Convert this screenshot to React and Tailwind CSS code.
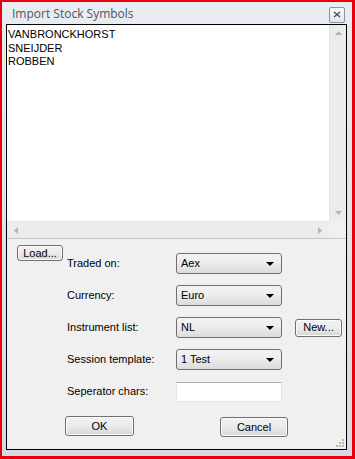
import React from "react";

const font = { fontFamily: '"Liberation Sans", Arial, sans-serif' };

const Combo = ({ value }) => (
  <div className="w-[106px] h-[21px] rounded-[3px] border border-[#707070] bg-gradient-to-b from-[#f4f4f4] via-[#ebebeb] to-[#dcdcdc] flex items-center justify-between pl-[4px] pr-[7px] text-[11px] text-black">
    <span>{value}</span>
    <svg width="8" height="4" viewBox="0 0 8 4">
      <path d="M0 0 H8 L4 4 Z" fill="#000" />
    </svg>
  </div>
);

const Button = ({ children, className }) => (
  <div
    className={
      "rounded-[3px] border border-[#707070] bg-gradient-to-b from-[#f2f2f2] via-[#ebebeb] to-[#d6d6d6] flex items-center justify-center text-[11px] text-black shadow-[inset_0_0_0_1px_#fcfcfc] " +
      className
    }
  >
    {children}
  </div>
);

const Row = ({ label, children }) => (
  <div className="flex items-center h-[21px]">
    <div className="w-[109px] text-[11px] text-black">{label}</div>
    {children}
  </div>
);

const App = () => {
  return (
    <div
      className="w-[355px] h-[459px] border-red-600 border-t-2 border-l-2 border-r-[3px] border-b-[3px] bg-[#ff0000]"
      style={font}
    >
      <div className="w-full h-full flex flex-col bg-gradient-to-b from-[#e9ecf0] to-[#d6dbe1] pl-[4px] pr-[5px] pb-[6px]">
        {/* title bar */}
        <div className="h-[22px] flex items-center justify-between pl-[6px] pr-[2px]">
          <span
            className="text-[12px] text-[#4e5863] pt-[1px]"
            style={{ fontFamily: '"Open Sans", "Noto Sans", sans-serif' }}
          >
            Import Stock Symbols
          </span>
          <div className="w-[16px] h-[16px] mt-[3px] rounded-[2px] border border-[#8a949e] bg-gradient-to-b from-[#f8f9fb] to-[#e2e6eb] flex items-center justify-center">
            <svg width="8" height="7" viewBox="0 0 8 7">
              <path d="M1 1 L7 6 M7 1 L1 6" stroke="#4a535d" strokeWidth="1.5" />
            </svg>
          </div>
        </div>

        {/* client area */}
        <div className="flex-1 border border-black bg-[#f0f0f0] flex flex-col relative">
          {/* text box */}
          <div className="h-[214px] border-b border-[#c8c8c8] bg-white flex flex-col">
            <div className="flex flex-1">
              <div className="flex-1 pl-[1px] pt-[3px] text-[11px] leading-[13.5px] text-black">
                <div>VANBRONCKHORST</div>
                <div>SNEIJDER</div>
                <div>ROBBEN</div>
              </div>
              <div className="w-[17px] bg-[#ececec] border-l border-[#e4e4e4] flex flex-col items-center justify-between py-[6px]">
                <svg width="7" height="4" viewBox="0 0 7 4">
                  <path d="M0 4 L3.5 0 L7 4 Z" fill="#b4b4b4" />
                </svg>
                <svg width="7" height="4" viewBox="0 0 7 4">
                  <path d="M0 0 L3.5 4 L7 0 Z" fill="#b4b4b4" />
                </svg>
              </div>
            </div>
            <div className="h-[17px] flex">
              <div className="flex-1 bg-[#ececec] border-t border-[#e4e4e4] flex items-center justify-between px-[7px]">
                <svg width="4" height="7" viewBox="0 0 4 7">
                  <path d="M4 0 L0 3.5 L4 7 Z" fill="#b4b4b4" />
                </svg>
                <svg width="4" height="7" viewBox="0 0 4 7">
                  <path d="M0 0 L4 3.5 L0 7 Z" fill="#b4b4b4" />
                </svg>
              </div>
              <div className="w-[17px] bg-[#f0f0f0]" />
            </div>
          </div>

          {/* form */}
          <div className="flex items-start pt-[6px] pl-[10px]">
            <Button className="w-[46px] h-[16px]">Load...</Button>
            <div className="flex flex-col gap-[11px] mt-[8px] ml-[4px]">
              <Row label="Traded on:">
                <Combo value="Aex" />
              </Row>
              <Row label="Currency:">
                <Combo value="Euro" />
              </Row>
              <Row label="Instrument list:">
                <Combo value="NL" />
                <Button className="w-[47px] h-[18px] ml-[13px]">New...</Button>
              </Row>
              <Row label="Session template:">
                <Combo value="1 Test" />
              </Row>
              <Row label="Seperator chars:">
                <div className="w-[106px] h-[20px] border border-[#e3e3e3] border-t-[#abadb3] bg-white" />
              </Row>
            </div>
          </div>

          <div className="flex mt-[14px] pl-[58px]">
            <Button className="w-[69px] h-[20px]">OK</Button>
            <Button className="w-[68px] h-[20px] ml-[86px] mt-[1px]">Cancel</Button>
          </div>

          <div className="absolute right-[2px] bottom-[2px] grid grid-cols-3 gap-[1px] w-[8px] h-[8px]">
            <span />
            <span />
            <span className="w-[2px] h-[2px] bg-[#b8b8b8]" />
            <span />
            <span className="w-[2px] h-[2px] bg-[#b8b8b8]" />
            <span className="w-[2px] h-[2px] bg-[#b8b8b8]" />
            <span className="w-[2px] h-[2px] bg-[#b8b8b8]" />
            <span className="w-[2px] h-[2px] bg-[#b8b8b8]" />
            <span className="w-[2px] h-[2px] bg-[#b8b8b8]" />
          </div>
        </div>
      </div>
    </div>
  );
};

export default App;
